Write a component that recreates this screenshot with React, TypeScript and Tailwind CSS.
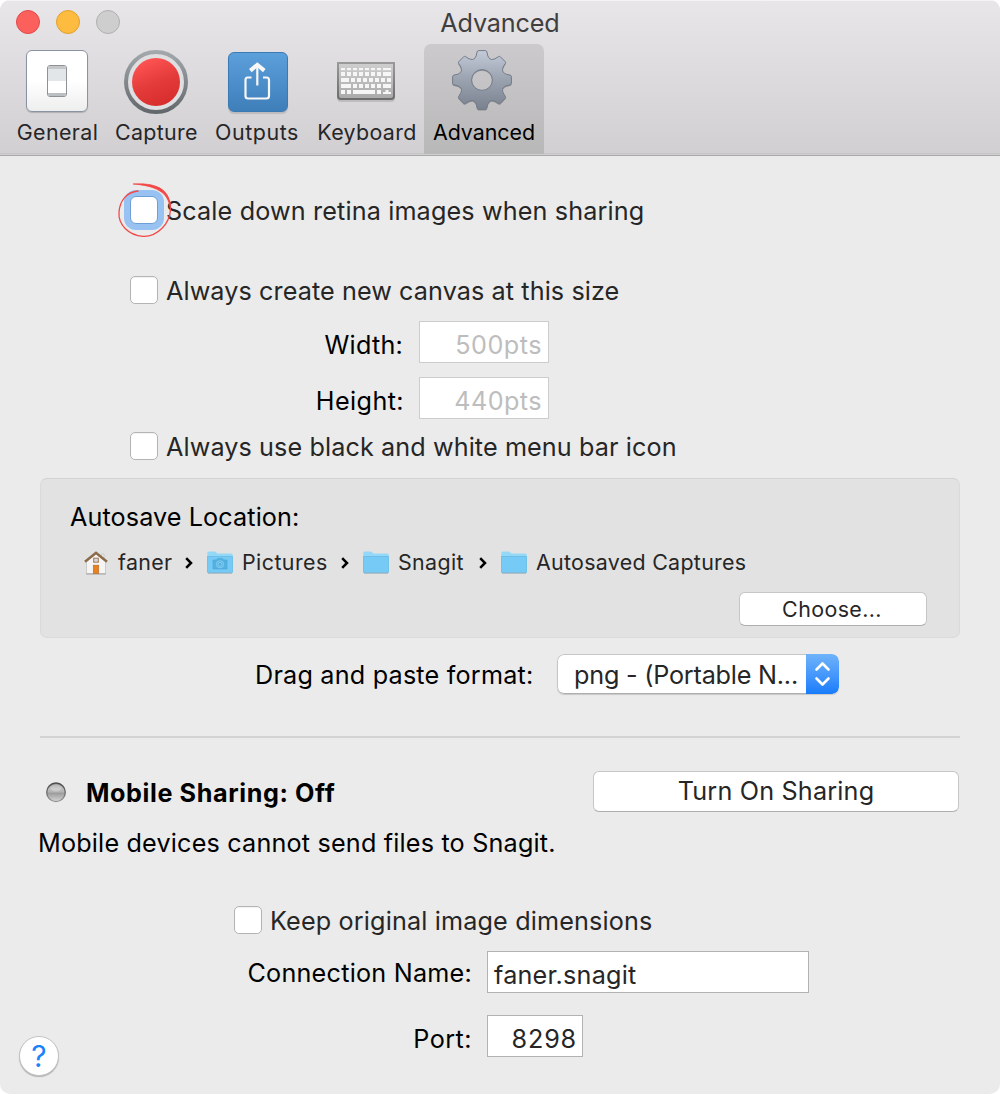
import React from "react";

type BoxProps = { className?: string; children?: React.ReactNode };

/* Gear outline with eight teeth around (32, 32). */
function gearPath() {
  let d = "";
  for (let i = 0; i < 8; i++) {
    const a = (i * Math.PI) / 4 - Math.PI / 2;
    const p = (u: number, v: number) =>
      `${(32 + u * Math.cos(a) - v * Math.sin(a)).toFixed(2)} ${(32 + u * Math.sin(a) + v * Math.cos(a)).toFixed(2)}`;
    d += `${i === 0 ? "M" : "L"}${p(21.2, -7.8)} Q${p(22.8, -6.4)} ${p(24.2, -5.8)} L${p(28, -4.9)} Q${p(29.4, -4.6)} ${p(29.4, -3.4)} L${p(29.4, 3.4)} Q${p(29.4, 4.6)} ${p(28, 4.9)} L${p(24.2, 5.8)} Q${p(22.8, 6.4)} ${p(21.2, 7.8)} `;
  }
  return d + "Z M42.4 32 A10.4 10.4 0 1 0 21.6 32 A10.4 10.4 0 1 0 42.4 32 Z";
}

function GearIcon() {
  const d = gearPath();
  return (
    <svg width="64" height="66" viewBox="0 0 64 66">
      <defs>
        <linearGradient id="gear" x1="0" y1="0" x2="0" y2="1">
          <stop offset="0" stopColor="#c3cbd8" />
          <stop offset="0.5" stopColor="#9aa2b0" />
          <stop offset="1" stopColor="#7a828f" />
        </linearGradient>
      </defs>
      <path d={d} transform="translate(0 1.2)" fill="#6e6e72" fillOpacity="0.6" fillRule="evenodd" />
      <path d={d} fill="url(#gear)" stroke="#747c89" strokeWidth="1" fillRule="evenodd" />
    </svg>
  );
}

function SwitchIcon() {
  return (
    <div className="flex h-[62px] w-[62px] items-center justify-center rounded-[6px] border border-[#8a93a1] bg-linear-to-b from-white from-50% to-[#eeeeee] shadow-[0_1px_1px_rgba(0,0,0,0.18)]">
      <div className="h-8 w-5 overflow-hidden rounded-[3px] border border-[#8f9295] bg-white">
        <div className="h-[3px] bg-[#c4c8ca]" />
        <div className="h-[12px] bg-[#e2e6e9]" />
        <div className="h-[12px] bg-white" />
        <div className="h-[3px] bg-[#b9bfc2]" />
      </div>
    </div>
  );
}

function RecordIcon() {
  return (
    <svg width="64" height="64" viewBox="0 0 64 64">
      <defs>
        <linearGradient id="ring" x1="0" y1="0" x2="0" y2="1">
          <stop offset="0" stopColor="#a3a8ac" />
          <stop offset="1" stopColor="#63686c" />
        </linearGradient>
        <linearGradient id="red" x1="0.3" y1="0" x2="0.7" y2="1">
          <stop offset="0" stopColor="#ff5555" />
          <stop offset="0.5" stopColor="#e43b3b" />
          <stop offset="1" stopColor="#d62c2c" />
        </linearGradient>
      </defs>
      <circle cx="32" cy="32" r="30" fill="#dfdee0" stroke="url(#ring)" strokeWidth="4" />
      <circle cx="32" cy="32" r="24" fill="url(#red)" />
    </svg>
  );
}

function ShareIcon() {
  return (
    <div className="h-[60px] w-[60px] rounded-[6px] border border-[#3b7bb4] bg-linear-to-b from-[#5b9fdb] to-[#3e7fba] shadow-[0_2px_1px_rgba(0,0,0,0.12)]">
      <svg width="58" height="58" viewBox="0 0 58 58" fill="none" stroke="#f7f7f7">
        <path d="M22.500 24.500 H18.500 Q16.500 24.500 16.500 27 V43 Q16.500 45.500 19 45.500 H37.500 Q40 45.500 40 43 V27 Q40 24.500 37.500 24.500 H34" strokeWidth="2.200" />
        <path d="M28.300 32.500 V12.500" strokeWidth="2.200" />
        <path d="M21.300 17.600 L28.300 11.800 L35.300 17.600" strokeWidth="4" />
      </svg>
    </div>
  );
}

/* Each row lists [x, width] pairs; y positions and heights are in keyRowY. */
const keyRowY = [[6, 2.2], [10, 4], [16, 4], [22, 4], [28, 4]];
const keyRows = [
  [[4, 4], [10, 4], [16, 4], [22, 4], [28, 4], [34, 4], [40, 4], [46, 8]],
  [[4, 4], [10, 4], [16, 4], [22, 4], [28, 4], [34, 4], [40, 4], [46, 8]],
  [[4, 8], [14, 4], [20, 4], [26, 4], [32, 4], [38, 4], [44, 4], [50, 4]],
  [[4, 10], [16, 4], [22, 4], [28, 4], [34, 4], [40, 4], [46, 8]],
  [[4, 4], [10, 4], [16, 22], [40, 4]],
];

function KeyboardIcon() {
  return (
    <svg width="58" height="42" viewBox="0 0 58 42">
      <defs>
        <linearGradient id="kb" x1="0" y1="0" x2="0" y2="1">
          <stop offset="0" stopColor="#cfcfcf" />
          <stop offset="1" stopColor="#a9a9a9" />
        </linearGradient>
        <linearGradient id="kbe" x1="0" y1="0" x2="0" y2="1">
          <stop offset="0" stopColor="#999" />
          <stop offset="1" stopColor="#6d6d6d" />
        </linearGradient>
      </defs>
      <path d="M0 1 H58 V36 Q58 40 54 40 H4 Q0 40 0 36 Z" fill="#000" fillOpacity="0.12" />
      <path d="M1 1 H57 V34 Q57 37 54 37 H4 Q1 37 1 34 Z" fill="url(#kb)" stroke="url(#kbe)" strokeWidth="2" />
      {keyRows.map((row, r) =>
        row.map(([x, w]) => <rect key={`${r}-${x}`} x={x} y={keyRowY[r][0]} width={w} height={keyRowY[r][1]} fill="#f6f6f6" />)
      )}
      <path d="M46 32 V30 H48.500 V28 H51.500 V30 H54 V32 Z" fill="#f6f6f6" />
    </svg>
  );
}

function HouseIcon() {
  return (
    <svg width="24" height="24" viewBox="0 0 24 24">
      <path d="M17.500 3 H20 V9 H17.500 Z" fill="#ececec" stroke="#bdbdbd" strokeWidth="0.600" />
      <path d="M2.500 10.500 L12 3 L21.500 10.500 V23 H2.500 Z" fill="#f5f5f5" stroke="#b5b5b5" strokeWidth="0.600" />
      <path d="M2.200 22.900 H21.800" stroke="#9a9a9a" strokeWidth="0.900" />
      <path d="M1 10.800 L12 1.800 L23 10.800" fill="none" stroke="#8d6b49" strokeWidth="2.500" />
      <rect x="9.700" y="7.200" width="4.600" height="4" fill="#d4d8dc" stroke="#a3764c" strokeWidth="1" />
      <rect x="9.300" y="14.200" width="5.400" height="8.400" fill="#e8811f" stroke="#b8702c" strokeWidth="0.700" />
    </svg>
  );
}

function FolderIcon({ camera = false }: { camera?: boolean }) {
  return (
    <svg width="26" height="24" viewBox="0 0 26 24">
      <path d="M0.300 2 Q0.300 0.500 1.800 0.500 H8 L10.500 2.500 H24.500 Q25.700 2.500 25.700 3.700 V21 H0.300 Z" fill="#93d8f6" />
      <path d="M0.300 5.500 H25.700 V20.700 Q25.700 21.700 24.700 21.700 H1.300 Q0.300 21.700 0.300 20.700 Z" fill="#75cbf6" stroke="#5eb2dd" strokeWidth="0.600" />
      <path d="M1 22.200 H25" stroke="#8fa4ae" strokeWidth="0.700" />
      {camera && (
        <g fill="none">
          <path d="M6 9 H9.500 L10.500 7.500 H15.500 L16.500 9 H20 V18 H6 Z" fill="#55b1e0" stroke="#4aa6d8" strokeWidth="0.600" />
          <circle cx="13" cy="13.300" r="3.600" stroke="#8bd3f5" strokeWidth="0.800" />
          <circle cx="13" cy="13.300" r="2" stroke="#8bd3f5" strokeWidth="0.800" />
        </g>
      )}
    </svg>
  );
}

function PathChevron({ className = "" }: BoxProps) {
  return (
    <svg className={className} width="8" height="12" viewBox="0 0 8 12" fill="none" stroke="#000" strokeWidth="2.500">
      <path d="M1.200 1.200 L6 6 L1.200 10.800" />
    </svg>
  );
}

function Checkbox({ focused = false }: { focused?: boolean }) {
  return (
    <div
      className={
        focused
          ? "h-7 w-7 shrink-0 rounded-[6px] border border-[#6f9fd6] bg-white shadow-[0_0_0_6px_#97c2f2]"
          : "h-7 w-7 shrink-0 rounded-[5px] border border-[#b4b4b4] bg-white shadow-[inset_0_1px_1px_rgba(0,0,0,0.06)]"
      }
    />
  );
}

function Label({ className = "", children }: BoxProps) {
  return <div className={`h-[30px] text-[25.2px] leading-[30px] whitespace-nowrap ${className}`}>{children}</div>;
}

function Small({ className = "", children }: BoxProps) {
  return <div className={`h-[26px] text-[21.4px] leading-[26px] whitespace-nowrap ${className}`}>{children}</div>;
}

function Tab({ className = "", icon, children }: BoxProps & { icon: React.ReactNode }) {
  return (
    <div className={`flex h-[110px] flex-col items-center text-[#262628] ${className}`}>
      <div className="flex h-[75px] w-full justify-center">{icon}</div>
      <Small>{children}</Small>
    </div>
  );
}

export default function App() {
  return (
    <div className="h-[1094px] w-[1000px] bg-white font-['Inter',sans-serif] text-black">
      <div className="flex h-full flex-col overflow-hidden rounded-[10px] bg-[#ebebeb]">
        <header className="h-[156px] border-t border-b border-t-[#f5f4f5] border-b-[#a9a8a9] bg-linear-to-b from-[#e8e6e8] to-[#d1cfd1]">
          <div className="grid h-[43px] grid-cols-[1fr_auto_1fr]">
            <div className="flex gap-4 pt-[9px] pl-4">
              <div className="h-6 w-6 rounded-full border border-[#e2494a] bg-[#fc605c]" />
              <div className="h-6 w-6 rounded-full border border-[#dfa02f] bg-[#fdbc40]" />
              <div className="h-6 w-6 rounded-full border border-[#b0afb0] bg-[#cfcecf]" />
            </div>
            <Label className="mt-[7px] tracking-[-0.15px] text-[#3f3e40]">Advanced</Label>
            <div />
          </div>
          <nav className="flex h-[110px] border-b border-[#c6c5c6] pl-2">
            <Tab className="w-[98px] tracking-[0.4px]" icon={<div className="mt-[6px]"><SwitchIcon /></div>}>
              <span className="ml-px">General</span>
            </Tab>
            <Tab className="w-[101px] tracking-[0.32px]" icon={<div className="mt-[6px] mr-[2px]"><RecordIcon /></div>}>Capture</Tab>
            <Tab className="w-[100px] tracking-[0.58px]" icon={<div className="mt-[8px] ml-[2px]"><ShareIcon /></div>}>Outputs</Tab>
            <Tab className="w-[117px] tracking-[0.35px]" icon={<div className="mt-[18px] ml-[1px]"><KeyboardIcon /></div>}>
              <span className="ml-[3px]">Keyboard</span>
            </Tab>
            <Tab className="w-[120px] rounded-t-[7px] bg-linear-to-b from-[#cccacc] to-[#b9b8b9] tracking-[-0.03px]" icon={<div className="mt-[4px] mr-[4px]"><GearIcon /></div>}>
              <span className="text-black">Advanced</span>
            </Tab>
          </nav>
        </header>

        <main className="flex flex-1 flex-col">
          <div className="relative mt-10 ml-[130px] flex h-[30px] gap-2 text-[#262626]">
            <Checkbox focused />
            <Label className="tracking-[0.14px]">Scale down retina images when sharing</Label>
            <svg className="absolute -top-[16px] -left-[14px]" width="60" height="60" viewBox="0 0 60 60" fill="none" stroke="#f24848" strokeWidth="1.300" strokeLinecap="round">
              <path d="M22 11 C11 12 4 20 3 32 C2 45 13 55.500 27 56.300 C41 57 54 44 54.500 29 C55 21 51 12 43 8" />
              <path d="M17.500 4 C31 3.200 43 5 49 12.500 C53 18 54.500 24 54.500 29 C53 20 49.500 14 43 10.500 C36 6.500 28 5 17.500 4 Z" fill="#f24848" strokeWidth="0.700" />
            </svg>
          </div>

          <div className="mt-[50px] ml-[130px] flex h-[30px] gap-2 text-[#262626]">
            <Checkbox />
            <Label className="tracking-[0.09px]">Always create new canvas at this size</Label>
          </div>

          <div className="mt-[15px] flex h-[42px]">
            <Label className="mt-[9px] w-[403px] text-right tracking-[0.23px]">Width:</Label>
            <div className="ml-[16px] w-[130px] border border-[#cdcdcd] bg-white pt-2 pr-[6px] text-right text-[#bdbdbd]">
              <Label className="tracking-[0.5px]">500pts</Label>
            </div>
          </div>
          <div className="mt-[14px] flex h-[42px]">
            <Label className="mt-[9px] w-[404px] text-right tracking-[0.4px]">Height:</Label>
            <div className="ml-[15px] w-[130px] border border-[#cdcdcd] bg-white pt-2 pr-[6px] text-right text-[#bdbdbd]">
              <Label className="tracking-[0.43px]">440pts</Label>
            </div>
          </div>

          <div className="mt-[13px] ml-[130px] flex h-[30px] gap-2 text-[#262626]">
            <Checkbox />
            <Label className="tracking-[0.1px]">Always use black and white menu bar icon</Label>
          </div>

          <section className="mx-10 mt-4 flex h-[160px] flex-col rounded-[7px] border border-[#dadada] border-t-[#d2d2d2] bg-[#e2e2e2]">
            <Label className="mt-[23px] ml-[29px] tracking-[0.1px]">Autosave Location:</Label>
            <div className="mt-[17px] ml-[43px] flex h-[26px] text-[#262626]">
              <div className="mt-[2px] w-[34px]"><HouseIcon /></div>
              <Small className="w-[67px] tracking-[0.32px]">faner</Small>
              <PathChevron className="mt-[8px] mr-[14px]" />
              <div className="mt-[2px] w-[35px]"><FolderIcon camera /></div>
              <Small className="w-[99px] tracking-[0.45px]">Pictures</Small>
              <PathChevron className="mt-[8px] mr-[14px]" />
              <div className="mt-[2px] w-[35px]"><FolderIcon /></div>
              <Small className="w-[81px] tracking-[0.35px]">Snagit</Small>
              <PathChevron className="mt-[8px] mr-[14px]" />
              <div className="mt-[2px] w-[35px]"><FolderIcon /></div>
              <Small className="tracking-[0.3px]">Autosaved Captures</Small>
            </div>
            <button className="mt-[17px] mr-8 h-[34px] w-[188px] self-end rounded-[6px] border border-[#c6c6c6] border-b-[#aeaeae] bg-white text-[#262626]">
              <Small className="-mt-px ml-[-2px] tracking-[0.4px]">Choose...</Small>
            </button>
          </section>

          <div className="mt-4 flex h-10">
            <Label className="mt-[6px] ml-[255px] w-[302px] tracking-[0.2px]">Drag and paste format:</Label>
            <div className="flex w-[282px] overflow-hidden rounded-[7px] shadow-[0_1px_1px_rgba(0,0,0,0.15)]">
              <div className="flex-1 rounded-l-[7px] border border-r-0 border-[#c6c6c6] border-b-[#aeaeae] bg-white pt-[5px] pl-[16px] text-[#262626]">
                <Label className="tracking-[-0.21px]">png - (Portable N...</Label>
              </div>
              <div className="w-[33px] rounded-r-[7px] bg-linear-to-b from-[#6eb3fa] to-[#157cfb]">
                <svg width="33" height="40" viewBox="0 0 33 40" fill="none" stroke="#fff" strokeWidth="2.600" strokeLinecap="round" strokeLinejoin="round">
                  <path d="M10.500 15.500 L16.500 9.500 L22.500 15.500 M10.500 24.500 L16.500 30.500 L22.500 24.500" />
                </svg>
              </div>
            </div>
          </div>

          <hr className="mx-10 mt-[42px] border-t-2 border-[#d3d3d3]" />

          <div className="mt-[33px] flex h-10 justify-between pr-[41px] pl-[46px]">
            <div className="flex">
              <svg className="mt-[11px]" width="20" height="22" viewBox="0 0 20 22">
                <defs>
                  <linearGradient id="led" x1="0" y1="0" x2="0" y2="1">
                    <stop offset="0" stopColor="#909090" />
                    <stop offset="0.300" stopColor="#bdbdbd" />
                    <stop offset="0.480" stopColor="#b4b4b4" />
                    <stop offset="0.550" stopColor="#9c9c9c" />
                    <stop offset="1" stopColor="#d6d6d6" />
                  </linearGradient>
                  <linearGradient id="rim" x1="0" y1="0" x2="0" y2="1">
                    <stop offset="0" stopColor="#4b4b4b" />
                    <stop offset="1" stopColor="#929292" />
                  </linearGradient>
                </defs>
                <circle cx="10" cy="10.300" r="9.300" fill="url(#led)" stroke="url(#rim)" strokeWidth="1.400" />
                <ellipse cx="10" cy="6" rx="5.500" ry="3.500" fill="#fff" fillOpacity="0.250" />
              </svg>
              <Label className="mt-[7px] ml-[20px] font-bold tracking-[0.6px]">Mobile Sharing: Off</Label>
            </div>
            <button className="h-[41px] w-[366px] rounded-[6px] border border-[#c6c6c6] border-b-[#aeaeae] bg-white text-[#262626]">
              <Label className="-mt-[2px] tracking-[0.18px]">Turn On Sharing</Label>
            </button>
          </div>

          <Label className="mt-[17px] ml-[38px] tracking-[0.18px]">Mobile devices cannot send files to Snagit.</Label>

          <div className="mt-[48px] ml-[234px] flex h-[30px] gap-2 text-[#262626]">
            <Checkbox />
            <Label className="tracking-[0.15px]">Keep original image dimensions</Label>
          </div>

          <div className="mt-[15px] flex h-[42px]">
            <Label className="mt-[7px] w-[472px] text-right tracking-[0.23px]">Connection Name:</Label>
            <div className="ml-[15px] w-[322px] border border-[#b2b2b2] bg-white pt-2 pl-[6px] text-[#262626]">
              <Label className="tracking-[0.21px]">faner.snagit</Label>
            </div>
          </div>

          <div className="mt-[22px] flex h-[42px]">
            <Label className="mt-[9px] w-[472px] text-right tracking-[0.46px]">Port:</Label>
            <div className="ml-[15px] w-[96px] border border-[#b2b2b2] bg-white pt-2 pr-[5px] text-right text-[#262626]">
              <Label className="tracking-[0.81px]">8298</Label>
            </div>
          </div>

          <button className="-mt-[21px] ml-[19px] flex h-10 w-10 items-center justify-center rounded-full border border-[#c4c4c4] bg-white text-[30px] leading-none text-[#1a82fb] shadow-[0_1px_1px_rgba(0,0,0,0.25)]">
            ?
          </button>
        </main>
      </div>
    </div>
  );
}
